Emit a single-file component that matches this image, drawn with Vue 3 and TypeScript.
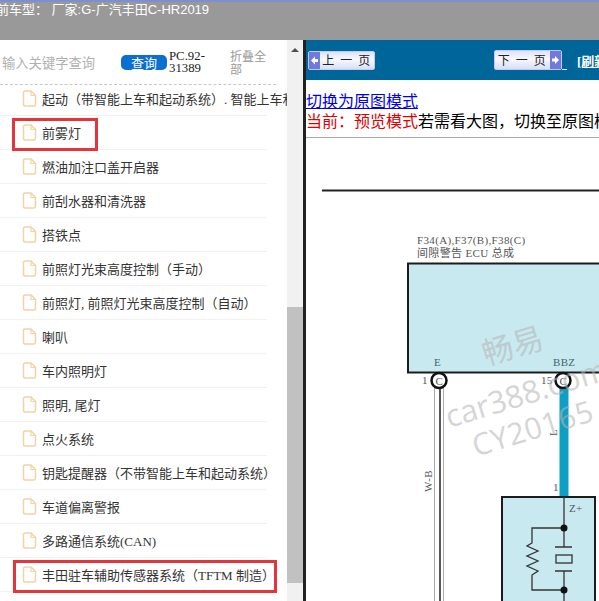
<template>
  <div class="page">
    <header class="top-bar">
      <div class="car-type">前车型： 厂家:G-广汽丰田C-HR2019</div>
    </header>
    <main class="body">
      <aside class="sidebar">
        <div class="side-main">
          <div class="search-row">
            <div class="search-hint">输入关键字查询</div>
            <button class="search-btn">查询</button>
            <div class="code">PC.92-31389</div>
            <div class="fold">折叠全部</div>
          </div>
          <ul class="tree">
            <li v-for="item in items" :key="item.label" class="tree-row" :class="{ marked: item.marked, wide: item.wide }">
              <svg class="file-icon" width="15" height="17" viewBox="0 0 15 17">
                <path d="M1.5 2.5a1.5 1.5 0 0 1 1.5-1.500h6l4.500 4.500v9a1.500 1.500 0 0 1-1.500 1.500h-9a1.500 1.500 0 0 1-1.500-1.500z" fill="#fff" stroke="#f2d3a6" stroke-width="1.500" />
                <path d="M9 1v4.500h4.500" fill="none" stroke="#f2d3a6" stroke-width="1.200" />
              </svg>
              <span class="tree-label">{{ item.label }}</span>
            </li>
          </ul>
        </div>
        <div class="scrollbar">
          <div class="arrow"></div>
          <div class="thumb"></div>
        </div>
      </aside>
      <section class="content">
        <div class="pager">
          <div class="page-btn prev">
            <svg class="side-arrow" width="11" height="17" viewBox="0 0 11 17"><rect width="11" height="17" fill="#7079de" /><path d="M2 8.500L6 4.500V7H9V10H6V12.500Z" fill="#fff" /></svg>
            <span class="page-text">上 一 页</span>
          </div>
          <div class="page-btn next">
            <span class="page-text">下 一 页</span>
            <svg class="side-arrow" width="11" height="18" viewBox="0 0 11 18"><rect width="11" height="18" fill="#7079de" /><path d="M9 9L5 5V7.500H2V10.500H5V13Z" fill="#fff" /></svg>
          </div>
          <span class="next-tail"></span>
          <a class="refresh">[刷新]</a>
        </div>
        <div class="mode">
          <a class="mode-link">切换为原图模式</a>
          <div class="mode-line"><span class="red">当前：预览模式</span>若需看大图，切换至原图模式查看</div>
        </div>
        <div class="sheet">
          <svg class="diagram" width="293" height="463" viewBox="306 138 293 463">
            <line x1="322" y1="190.500" x2="599" y2="190.500" stroke="#222" stroke-width="2" />
            <text x="417" y="244" class="dg">F34(A),F37(B),F38(C)</text>
            <text x="417" y="257" class="dg">间隙警告 ECU 总成</text>
            <rect x="408" y="263.500" width="200" height="109" fill="#c9e9f1" stroke="#1c1c1c" stroke-width="2" />
            <text x="434" y="366" class="dg teal">E</text>
            <text x="553" y="366" class="dg teal">BBZ</text>
            <text x="422" y="384" class="dg">1</text>
            <text x="541" y="384" class="dg">15</text>
            <rect x="435" y="387" width="9" height="214" fill="#fff" />
            <line x1="434.500" y1="387" x2="434.500" y2="601" stroke="#aaa" />
            <line x1="440" y1="387" x2="440" y2="601" stroke="#222" stroke-width="1.500" />
            <line x1="443.500" y1="387" x2="443.500" y2="601" stroke="#aaa" />
            <rect x="559.500" y="387" width="9" height="110" fill="#0e9fc6" />
            <circle cx="439" cy="380.500" r="7.500" fill="#fff" stroke="#111" stroke-width="2.500" />
            <circle cx="563" cy="380.500" r="7.500" fill="#fff" stroke="#111" stroke-width="2.500" />
            <text x="435.500" y="384.500" class="dg">C</text>
            <text x="559.500" y="384.500" class="dg">C</text>
            <text x="553" y="491" class="dg">1</text>
            <text transform="translate(557 436) rotate(-90)" class="dg">L</text>
            <text transform="translate(432 492) rotate(-90)" class="dg">W-B</text>
            <rect x="502" y="497" width="93" height="120" fill="#c9e9f1" stroke="#1c1c1c" stroke-width="2" />
            <text x="569" y="512" class="dg">Z+</text>
            <path d="M564 497V547M564 571V601M564 528H532V543L527 546L538 551L527 556L538 561L527 566L538 571L532 575V590H564M555 547H572M555 571H572" fill="none" stroke="#333" stroke-width="1.300" />
            <rect x="556" y="555" width="16" height="8" fill="none" stroke="#333" stroke-width="1.300" />
            <circle cx="564" cy="528" r="3.500" fill="#111" />
            <circle cx="564" cy="590" r="3.500" fill="#111" />
          </svg>
          <div class="wm wm1">畅易</div>
          <div class="wm wm2">car388.com</div>
          <div class="wm wm3">CY20165</div>
        </div>
      </section>
    </main>
  </div>
</template>

<script setup lang="ts">
interface TreeItem {
  label: string
  marked?: boolean
  wide?: boolean
}

const items: TreeItem[] = [
  { label: '起动（带智能上车和起动系统）. 智能上车和起动系统' },
  { label: '前雾灯', marked: true },
  { label: '燃油加注口盖开启器' },
  { label: '前刮水器和清洗器' },
  { label: '搭铁点' },
  { label: '前照灯光束高度控制（手动）' },
  { label: '前照灯, 前照灯光束高度控制（自动）' },
  { label: '喇叭' },
  { label: '车内照明灯' },
  { label: '照明, 尾灯' },
  { label: '点火系统' },
  { label: '钥匙提醒器（不带智能上车和起动系统）' },
  { label: '车道偏离警报' },
  { label: '多路通信系统(CAN)' },
  { label: '丰田驻车辅助传感器系统（TFTM 制造）', marked: true, wide: true },
]
</script>

<style>
html,
body {
  margin: 0;
  background: #fff;
  overflow: hidden;
}
</style>

<style scoped>
.page {
  width: 599px;
  height: 601px;
  overflow: hidden;
  display: flex;
  flex-direction: column;
  font-family: "Noto Sans CJK SC", "Liberation Sans", sans-serif;
}

.top-bar {
  height: 38px;
  flex: none;
  background: #999999;
  border-top: 2px solid #7d8fd0;
  overflow: hidden;
}

.car-type {
  color: #fff;
  font-size: 13px;
  line-height: 16px;
  margin-left: -4px;
  white-space: nowrap;
  font-family: "Liberation Sans", "Noto Sans CJK SC", sans-serif;
}

.body {
  flex: 1;
  min-height: 0;
  display: flex;
}

.sidebar {
  width: 303px;
  flex: none;
  display: flex;
  background: #fff;
}

.side-main {
  width: 287px;
  flex: none;
  overflow: hidden;
}

.search-row {
  position: relative;
  z-index: 1;
  height: 44px;
  display: flex;
  align-items: center;
  background: #fff;
  border-bottom: 1px dashed #c8c8c8;
  width: 276px;
}

.search-hint {
  width: 121px;
  flex: none;
  padding-left: 2px;
  box-sizing: border-box;
  color: #b0b0b0;
  font-size: 13.300px;
  white-space: nowrap;
}

.search-btn {
  width: 46px;
  height: 15px;
  flex: none;
  padding: 0;
  border: 0;
  border-radius: 5px;
  background: #0a6fd0;
  color: #fff;
  font-size: 13px;
  line-height: 15px;
  font-family: inherit;
}

.code {
  width: 61px;
  flex: none;
  margin-left: 2px;
  font-family: "Liberation Serif", serif;
  font-size: 12.800px;
  line-height: 12px;
  color: #222;
}

.fold {
  width: 40px;
  flex: none;
  color: #999;
  font-size: 12px;
  line-height: 13px;
}

.tree {
  list-style: none;
  margin: -3px 0 0;
  padding: 0;
}

.tree-row {
  position: relative;
  height: 34px;
  box-sizing: border-box;
  width: 267px;
  display: flex;
  align-items: center;
  padding-left: 22px;
  border-bottom: 1px solid #f1f1f1;
  white-space: nowrap;
}

.tree-row.marked::after {
  content: "";
  position: absolute;
  left: 12px;
  top: 2px;
  width: 86px;
  height: 33px;
  box-sizing: border-box;
  border: 3px solid #e5343a;
}

.tree-row.marked.wide::after {
  left: 13px;
  width: 264px;
}

.file-icon {
  flex: none;
}

.tree-label {
  margin-left: 5px;
  font-size: 13px;
  color: #333;
  font-family: "Liberation Serif", "Noto Sans CJK SC", serif;
}

.scrollbar {
  width: 16px;
  flex: none;
  background: #f1f1f1;
  display: flex;
  flex-direction: column;
}

.arrow {
  width: 0;
  height: 0;
  margin: 8px auto 0;
  border-left: 4px solid transparent;
  border-right: 4px solid transparent;
  border-bottom: 4px solid #505050;
}

.thumb {
  margin-top: 255px;
  height: 276px;
  background: #c1c1c1;
}

.content {
  flex: 1;
  min-width: 0;
  border-left: 3px solid #222;
  display: flex;
  flex-direction: column;
  overflow: hidden;
}

.pager {
  height: 40px;
  flex: none;
  background: #006699;
  display: flex;
  align-items: center;
  white-space: nowrap;
}

.page-btn {
  height: 19px;
  flex: none;
  box-sizing: border-box;
  display: flex;
  align-items: center;
  background: linear-gradient(#dfe3fa, #f7f8ff 45%, #d9def8);
  border: 1px solid #c2caf0;
  border-radius: 2px;
  font-size: 12px;
  color: #222;
}

.prev {
  width: 67px;
  margin-left: 2px;
}

.next {
  width: 68px;
  height: 20px;
  margin-left: 119px;
}

.side-arrow {
  flex: none;
  display: block;
}

.page-text {
  flex: 1;
  text-align: center;
  letter-spacing: 1.500px;
  font-family: "Liberation Serif", "Noto Sans CJK SC", serif;
}

.next-tail {
  width: 5px;
  height: 1px;
  flex: none;
  margin-top: 18px;
  background: #fff;
}

.refresh {
  margin-left: 10px;
  flex: none;
  color: #fff;
  font-size: 13px;
  font-weight: 700;
  text-decoration: underline;
  font-family: "Liberation Serif", "Noto Sans CJK SC", serif;
}

.mode {
  height: 58px;
  flex: none;
  box-sizing: border-box;
  padding-top: 10px;
  border-bottom: 1px solid #aaaaaa;
  font-size: 16px;
  line-height: 20px;
  white-space: nowrap;
}

.mode-link {
  color: #0000ee;
  text-decoration: underline;
}

.mode-line {
  color: #000;
}

.red {
  color: #e00000;
}

.sheet {
  position: relative;
  flex: 1;
  min-height: 0;
  overflow: hidden;
}

.diagram {
  display: block;
}

.dg {
  font-family: "Liberation Serif", "Noto Sans CJK SC", serif;
  font-size: 11px;
  letter-spacing: 0.350px;
  fill: #555;
}

.teal {
  fill: #3f6670;
}

.wm {
  position: absolute;
  color: #b4b4b4;
  opacity: 0.55;
  transform: rotate(-17deg);
  white-space: nowrap;
  font-family: "Open Sans", "Noto Sans CJK SC", sans-serif;
}

.wm1 {
  left: 175px;
  top: 183px;
  font-size: 31px;
}

.wm2 {
  left: 136px;
  top: 233px;
  font-size: 31px;
}

.wm3 {
  left: 164px;
  top: 269px;
  font-size: 30px;
  letter-spacing: 0.500px;
}
</style>
